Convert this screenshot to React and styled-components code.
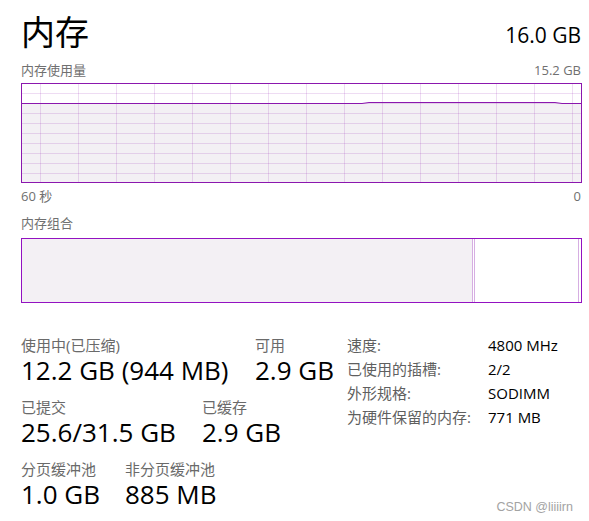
import React from "react";
import styled, { createGlobalStyle } from "styled-components";

const GlobalStyle = createGlobalStyle`
  html, body {
    margin: 0;
    padding: 0;
    background: #fff;
  }
  body {
    font-family: "Open Sans", "Noto Sans CJK SC", sans-serif;
  }
`;

const PURPLE = "#8b17ae";
const GRID = "rgba(139, 18, 174, 0.15)";
const FILL = "#f3f0f4";

const Page = styled.div`
  position: relative;
  width: 589px;
  height: 521px;
  box-sizing: border-box;
  padding: 0 8px 0 21px;
  background: #fff;
  color: #000;
  overflow: hidden;
`;

const Header = styled.div`
  display: flex;
  justify-content: space-between;
  align-items: flex-start;
  height: 57px;
  padding-top: 7px;
  box-sizing: border-box;
`;

const Title = styled.h1`
  margin: 0;
  font-family: "Noto Sans CJK SC", sans-serif;
  font-weight: 400;
  font-size: 34px;
  line-height: 48px;
`;

const Total = styled.div`
  font-size: 21px;
  line-height: 24px;
  padding-top: 16px;
`;

const Caption = styled.div`
  display: flex;
  justify-content: space-between;
  height: 18px;
  margin-top: ${(p) => p.$gap || 0}px;
  font-size: 13px;
  line-height: 18px;
  color: #707070;
`;

const Graph = styled.div`
  width: 561px;
  height: 100px;
  margin-top: 4px;
  box-sizing: border-box;
  border: 1px solid ${PURPLE};
  background: #fff;

  svg {
    display: block;
  }
`;

const Bar = styled.div`
  display: flex;
  width: 561px;
  height: 65px;
  margin-top: 6px;
  box-sizing: border-box;
  border: 1px solid #9312c1;
`;

const Segment = styled.div`
  flex: ${(p) => (p.$grow ? 1 : "none")};
  width: ${(p) => (p.$grow ? "auto" : `${p.$w}px`)};
  box-sizing: border-box;
  background: ${(p) => (p.$filled ? FILL : "#fff")};
  border-right: ${(p) => (p.$edge ? "1px solid #d6aee2" : "none")};
`;

const Stats = styled.div`
  display: grid;
  grid-template-columns: 326px 1fr;
  margin-top: 30px;
`;

const Left = styled.div`
  display: flex;
  flex-direction: column;
  gap: 12px;
  padding-top: 2px;
`;

const StatRow = styled.div`
  display: grid;
  grid-template-columns: ${(p) => p.$first}px auto;
`;

const Label = styled.div`
  font-size: 15px;
  line-height: 20px;
  height: 20px;
  color: #6a6a6a;
  white-space: nowrap;
`;

const Value = styled.div`
  font-size: 26px;
  line-height: 30px;
  height: 30px;
  white-space: nowrap;
`;

const Specs = styled.div`
  display: grid;
  grid-template-columns: 141px auto;
  grid-auto-rows: 24px;
  align-content: start;
  font-size: 15px;
  line-height: 24px;
`;

const SpecLabel = styled.div`
  color: #5f5f5f;
  white-space: nowrap;
`;

const SpecValue = styled.div`
  color: #000;
  white-space: nowrap;
`;

const Watermark = styled.div`
  position: absolute;
  right: 16px;
  bottom: 6px;
  font-family: "Liberation Sans", Arial, sans-serif;
  font-size: 12.5px;
  line-height: 16px;
  color: #a3a3a3;
`;

const W = 559;
const H = 98;
const vLines = Array.from({ length: 15 }, (_, i) => 18.5 + i * 38);
const hLines = Array.from({ length: 9 }, (_, i) => 9.5 + i * 10);
const usage = [
  [0, 19.5],
  [340, 19.5],
  [347, 18.5],
  [533, 18.5],
  [540, 19.5],
  [W, 19.5],
];

const UsageChart = () => {
  const line = usage.map(([x, y]) => `${x},${y}`).join(" ");
  const area = `${line} ${W},${H} 0,${H}`;
  return (
    <svg width={W} height={H} viewBox={`0 0 ${W} ${H}`}>
      <polygon points={area} fill={FILL} />
      {vLines.map((x) => (
        <line key={`v${x}`} x1={x} y1={0} x2={x} y2={H} stroke={GRID} strokeWidth="1" />
      ))}
      {hLines.map((y) => (
        <line key={`h${y}`} x1={0} y1={y} x2={W} y2={y} stroke={GRID} strokeWidth="1" />
      ))}
      <polyline points={line} fill="none" stroke={PURPLE} strokeWidth="1" />
    </svg>
  );
};

const specs = [
  ["速度:", "4800 MHz"],
  ["已使用的插槽:", "2/2"],
  ["外形规格:", "SODIMM"],
  ["为硬件保留的内存:", "771 MB"],
];

export default function App() {
  return (
    <>
      <GlobalStyle />
      <Page>
        <Header>
          <Title>内存</Title>
          <Total>16.0 GB</Total>
        </Header>

        <Caption $gap={4}>
          <span>内存使用量</span>
          <span>15.2 GB</span>
        </Caption>
        <Graph>
          <UsageChart />
        </Graph>
        <Caption $gap={4}>
          <span>60 秒</span>
          <span>0</span>
        </Caption>

        <Caption $gap={9}>
          <span>内存组合</span>
        </Caption>
        <Bar>
          <Segment $filled $edge $w={451} />
          <Segment $edge $w={2} />
          <Segment $edge $grow />
          <Segment $w={2} />
        </Bar>

        <Stats>
          <Left>
            <StatRow $first={234}>
              <div>
                <Label>使用中(已压缩)</Label>
                <Value>12.2 GB (944 MB)</Value>
              </div>
              <div>
                <Label>可用</Label>
                <Value>2.9 GB</Value>
              </div>
            </StatRow>
            <StatRow $first={181}>
              <div>
                <Label>已提交</Label>
                <Value>25.6/31.5 GB</Value>
              </div>
              <div>
                <Label>已缓存</Label>
                <Value>2.9 GB</Value>
              </div>
            </StatRow>
            <StatRow $first={104}>
              <div>
                <Label>分页缓冲池</Label>
                <Value>1.0 GB</Value>
              </div>
              <div>
                <Label>非分页缓冲池</Label>
                <Value>885 MB</Value>
              </div>
            </StatRow>
          </Left>

          <Specs>
            {specs.map(([k, v]) => (
              <React.Fragment key={k}>
                <SpecLabel>{k}</SpecLabel>
                <SpecValue>{v}</SpecValue>
              </React.Fragment>
            ))}
          </Specs>
        </Stats>

        <Watermark>CSDN @liiiirn</Watermark>
      </Page>
    </>
  );
}
